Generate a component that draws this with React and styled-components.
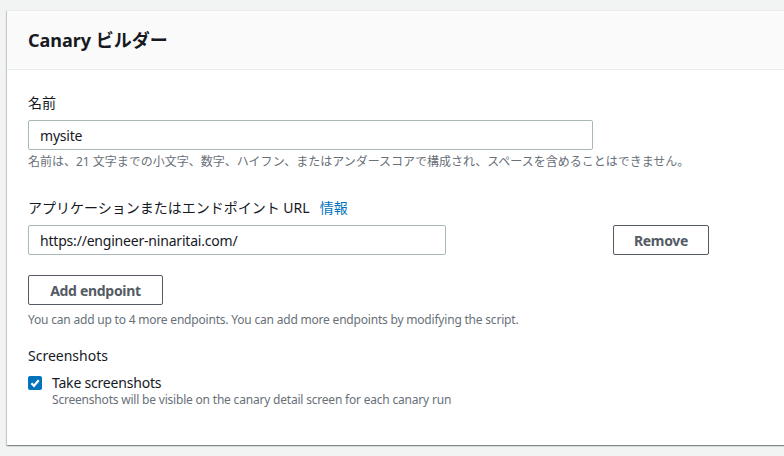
import React from "react";
import styled, { createGlobalStyle } from "styled-components";

const Global = createGlobalStyle`
  html, body { margin: 0; padding: 0; background: #f2f3f3; }
  body { font-family: "Noto Sans", "Noto Sans CJK JP", sans-serif; color: #16191f; overflow: hidden; }
  * { box-sizing: border-box; }
`;

const Page = styled.div`
  width: 784px;
  height: 456px;
  padding: 10px 0 0 7px;
  overflow: hidden;
`;

const Card = styled.section`
  width: 820px;
  background: #fff;
  box-shadow: 0 1px 1px 0 rgba(0, 28, 36, 0.3), 1px 1px 1px 0 rgba(0, 28, 36, 0.15),
    -1px 1px 1px 0 rgba(0, 28, 36, 0.15);
  border-top: 1px solid #eaeded;
`;

const Header = styled.header`
  height: 59px;
  display: flex;
  align-items: center;
  padding: 0 21px;
  background: #fafafa;
  border-bottom: 1px solid #eaeded;
`;

const Title = styled.h2`
  margin: 0;
  font-size: 18px;
  font-weight: 700;
  line-height: 22px;
  color: #16191f;
`;

const Body = styled.div`
  padding: 22px 21px 37px;
  display: flex;
  flex-direction: column;
`;

const Field = styled.div`
  display: flex;
  flex-direction: column;
  margin-top: ${(p) => p.$mt || 0}px;
`;

const Label = styled.label`
  font-size: 14px;
  line-height: 22px;
  display: flex;
  gap: 10px;
  margin-bottom: ${(p) => (p.$mb === undefined ? 6 : p.$mb)}px;
`;

const InfoLink = styled.a`
  color: #0073bb;
  text-decoration: none;
`;

const Input = styled.input`
  width: ${(p) => p.$w}px;
  height: 30px;
  border: 1px solid #aab7b8;
  border-radius: 2px;
  padding: 0 11px;
  font: inherit;
  font-size: 14px;
  letter-spacing: -0.2px;
  color: #16191f;
  background: #fff;
  outline: none;
`;

const Hint = styled.div`
  font-size: 12px;
  line-height: 16px;
  color: #687078;
  letter-spacing: ${(p) => (p.$tight ? "-0.2px" : "0")};
  margin-top: ${(p) => (p.$mt === undefined ? 4 : p.$mt)}px;
`;

const Row = styled.div`
  display: flex;
  align-items: center;
  gap: 167px;
`;

const Button = styled.button`
  height: 30px;
  width: ${(p) => p.$w}px;
  border: 1px solid #545b64;
  border-radius: 2px;
  background: #fff;
  color: #545b64;
  font: inherit;
  font-size: 14px;
  font-weight: 700;
  letter-spacing: -0.3px;
  cursor: pointer;
  padding: 0;
`;

const CheckRow = styled.div`
  display: flex;
  gap: 10px;
  margin-top: 7px;
`;

const Box = styled.span`
  width: 14px;
  height: 14px;
  margin-top: 2px;
  border-radius: 2px;
  background: #0073bb;
  display: flex;
  align-items: center;
  justify-content: center;
  flex-shrink: 0;
`;

const CheckText = styled.div`
  display: flex;
  flex-direction: column;
`;

const CheckLabel = styled.div`
  font-size: 14px;
  line-height: 18px;
  letter-spacing: -0.2px;
`;

export default function App() {
  return (
    <>
      <Global />
      <Page>
        <Card>
          <Header>
            <Title>Canary ビルダー</Title>
          </Header>
          <Body>
            <Field>
              <Label>名前</Label>
              <Input $w={565} defaultValue="mysite" />
              <Hint>
                名前は、21 文字までの小文字、数字、ハイフン、またはアンダースコアで構成され、スペースを含めることはできません。
              </Hint>
            </Field>
            <Field $mt={27}>
              <Label>
                アプリケーションまたはエンドポイント URL <InfoLink href="#">情報</InfoLink>
              </Label>
              <Row>
                <Input $w={418} defaultValue="https://engineer-ninaritai.com/" />
                <Button $w={96}>Remove</Button>
              </Row>
            </Field>
            <Field $mt={20}>
              <div>
                <Button $w={135}>Add endpoint</Button>
              </div>
              <Hint $tight $mt={7}>
                You can add up to 4 more endpoints. You can add more endpoints by modifying the script.
              </Hint>
            </Field>
            <Field $mt={17}>
              <Label as="div" $mb={0}>Screenshots</Label>
              <CheckRow>
                <Box>
                  <svg width="10" height="10" viewBox="0 0 10 10">
                    <path d="M1.4 5.2 L4 7.8 L8.7 2.3" fill="none" stroke="#fff" strokeWidth="2.2" />
                  </svg>
                </Box>
                <CheckText>
                  <CheckLabel>Take screenshots</CheckLabel>
                  <Hint $tight $mt={0}>
                    Screenshots will be visible on the canary detail screen for each canary run
                  </Hint>
                </CheckText>
              </CheckRow>
            </Field>
          </Body>
        </Card>
      </Page>
    </>
  );
}
